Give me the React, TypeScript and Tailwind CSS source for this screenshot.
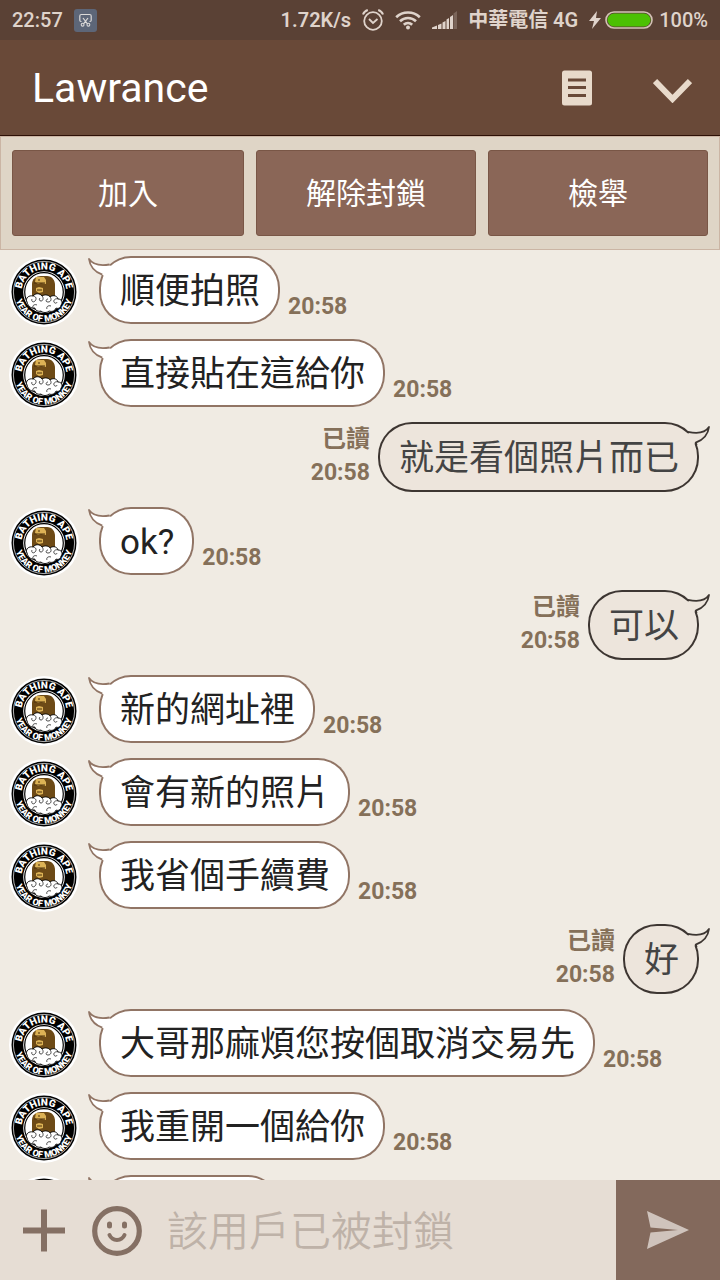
import { useId, useState } from 'react';

interface Message {
  id: number;
  text: string;
  time?: string;
  mine?: boolean;
}

const messages: Message[] = [
  { id: 1, text: '順便拍照', time: '20:58' },
  { id: 2, text: '直接貼在這給你', time: '20:58' },
  { id: 3, text: '就是看個照片而已', time: '20:58', mine: true },
  { id: 4, text: 'ok?', time: '20:58' },
  { id: 5, text: '可以', time: '20:58', mine: true },
  { id: 6, text: '新的網址裡', time: '20:58' },
  { id: 7, text: '會有新的照片', time: '20:58' },
  { id: 8, text: '我省個手續費', time: '20:58' },
  { id: 9, text: '好', time: '20:58', mine: true },
  { id: 10, text: '大哥那麻煩您按個取消交易先', time: '20:58' },
  { id: 11, text: '我重開一個給你', time: '20:58' },
  { id: 12, text: '\u3000\u3000\u3000\u3000' },
];

function StatusBar() {
  return (
    <div className="flex h-10 shrink-0 items-center justify-between bg-[#5a4135] px-3 text-[20px] leading-none font-semibold text-[#dfd3cb]">
      <div className="flex items-center gap-[11px]">
        <span className="font-medium">22:57</span>
        <svg width="23" height="23" viewBox="0 0 23 23" fill="none">
          <rect width="23" height="23" rx="3" fill="#5d6678" />
          <path d="M7.500 12.500H7a1.200 1.200 0 0 1-1.200-1.200V7A1.500 1.500 0 0 1 7.300 5.500h8.400A1.500 1.500 0 0 1 17.200 7v4.300a1.200 1.200 0 0 1-1.200 1.200h-.5M9 9l4.300 5.600M14 9l-4.300 5.600" stroke="#dcdad9" strokeWidth="1.200" />
          <circle cx="8.600" cy="15.700" r="1.400" stroke="#dcdad9" strokeWidth="1.100" />
          <circle cx="14.400" cy="15.700" r="1.400" stroke="#dcdad9" strokeWidth="1.100" />
        </svg>
      </div>
      <div className="flex items-center gap-[11px]">
        <span>1.72K/s</span>
        <svg width="22" height="22" viewBox="0 0 22 22" fill="none" stroke="currentColor" strokeWidth="1.800">
          <circle cx="11" cy="12" r="8.800" />
          <path d="M7 10l4 4 4.500-4" />
          <path d="M1 5.500C1.800 3.300 3.500 1.700 5.800 1M21 5.500C20.200 3.300 18.500 1.700 16.200 1" strokeWidth="2" />
        </svg>
        <svg width="26" height="20" viewBox="0 0 26 20" fill="none" stroke="currentColor" strokeWidth="2.600">
          <path d="M1.200 7.200c6.500-6.300 17.100-6.300 23.600 0M5 11.200c4.500-4.300 11.500-4.300 16 0M8.800 14.800c2.400-2.200 6-2.200 8.400 0" />
          <circle cx="13" cy="17.600" r="2" fill="currentColor" stroke="none" />
        </svg>
        <svg width="25" height="18" viewBox="0 0 25 18" fill="currentColor">
          <path d="M0 18v-1.500l5-2V18zM6 18v-4l3.500-1.500V18zM10.500 18v-6.500l3-1.500v8zM14.500 18V8.500l2.500-1.500v11zM18 18V6l3-2v14z" />
          <path d="M21.500 18V2.500L25 0v18z" opacity=".25" />
        </svg>
        <span>中華電信 4G</span>
        <div className="flex items-center gap-1">
          <svg width="12" height="20" viewBox="0 0 12 20" fill="currentColor">
            <path d="M8 1L0 11h5L3 19l9-11H7z" />
          </svg>
          <svg width="48" height="18" viewBox="0 0 48 18">
            <rect x="1" y="1" width="46" height="16" rx="8" fill="#5a4135" stroke="#d3c3b5" strokeWidth="1.600" />
            <rect x="2.500" y="2.500" width="43" height="13" rx="6.500" fill="#4cc003" />
          </svg>
          <span className="pl-0.5 font-medium">100%</span>
        </div>
      </div>
    </div>
  );
}

function Avatar() {
  const id = useId();

  return (
    <svg width="70" height="70" viewBox="0 0 70 70" className="shrink-0" role="img" aria-label="Lawrance">
      <defs>
        <path id={`${id}-top`} d="M12.500 35a22.500 22.500 0 0 1 45 0" />
        <path id={`${id}-bottom`} d="M5.500 35a29.500 29.500 0 0 0 59 0" />
      </defs>
      <circle cx="35" cy="35" r="35" fill="#fff" />
      <circle cx="35" cy="35" r="32.500" fill="#000" />
      <circle cx="35" cy="35" r="30.600" fill="none" stroke="#fff" strokeWidth=".7" />
      <circle cx="35" cy="35" r="20.800" fill="#fff" />
      <circle cx="35" cy="35" r="19.300" fill="none" stroke="#000" strokeWidth="1.200" />
      <path d="M23 40V27c0-5 4-8 9-8h6c5 0 8 4 8 9v12z" fill="#6d4a16" />
      <path d="M27 20h8l2 3v4l-5-1-3 1-3-2zM27 31l3-1 4 1v4l-4 1-3-2z" fill="#dcb255" />
      <path d="M25 26h11M28 33h5M30 22v2" stroke="#4a2f0a" strokeWidth="1" />
      <path
        d="M18 45c-2-4 2-7 6-6 2-3 7-3 9 0 3-2 7-1 8 1 2-2 7-2 8 2 4 0 5 4 3 6 0 3-3 4-5 3-1 3-4 4-7 3-2 2-6 2-8 0-3 1-6-1-6-3-4 1-7-2-8-6z"
        fill="#fff"
        stroke="#000"
        strokeWidth=".9"
      />
      <path
        d="M24 39c3 0 4 3 2 5s-4 0-3-2M33 39c2 2 1 5-1 5s-2-2-1-3M41 40c2 2 1 5-2 5s-2-3 0-3M49 42c-2-1-5 1-4 3s3 1 3 0M24 51c-1-3 2-4 4-3M38 52c-1-2 1-4 4-3"
        fill="none"
        stroke="#000"
        strokeWidth=".7"
      />
      <g fill="#fff" textAnchor="middle" className="font-black">
        <text fontSize="10">
          <textPath href={`#${id}-top`} startOffset="50%">BATHING APE</textPath>
        </text>
        <text fontSize="9">
          <textPath href={`#${id}-bottom`} startOffset="50%">YEAR OF MONKEY</textPath>
        </text>
      </g>
    </svg>
  );
}

function IncomingMessage({ message }: { message: Message }) {
  return (
    <li className="flex items-end pl-[9px]">
      <div className="h-[68px] pt-px">
        <Avatar />
      </div>
      <div className="relative ml-5 h-[68px] rounded-[32px] bg-white pr-5 pl-[21px] text-[35px] leading-[72px] whitespace-nowrap text-[#222] ring-2 ring-[#917565] ring-inset">
        {message.text}
        <svg width="32" height="24" viewBox="-12 0 32 24" className="absolute top-0 -left-3">
          <path d="M-10 3C-7 8 0 10 9.500 9L18 12 8 22 3.700 19C-3 17-8 11-10 3z" fill="#fff" />
          <path d="M10.500 8.500C1 10-6 9-10 3C-9 11-4 16 3.300 18.700" fill="none" stroke="#917565" strokeWidth="1.800" strokeLinejoin="round" />
        </svg>
      </div>
      {message.time && (
        <time className="ml-2 pb-[3px] text-[23px] leading-7 font-bold text-[#857059]">{message.time}</time>
      )}
    </li>
  );
}

function OutgoingMessage({ message }: { message: Message }) {
  return (
    <li className="flex items-start justify-end pr-[21px]">
      <div className="mr-2 pt-px text-right text-[23px] leading-[33px] font-bold text-[#857059]">
        <p className="text-[24px]">已讀</p>
        <time className="block">{message.time}</time>
      </div>
      <div className="relative h-[70px] rounded-[34px] bg-[#ede5dc] pr-5 pl-[21px] text-[35px] leading-[74px] whitespace-nowrap text-[#444] ring-2 ring-[#3d3632] ring-inset">
        {message.text}
        <svg width="32" height="24" viewBox="-20 -2 32 24" className="absolute top-0 -right-3">
          <path d="M10 3C7 8 0 10-9.500 9L-18 12-8 22-3.700 19C3 17 8 11 10 3z" fill="#ede5dc" />
          <path d="M-11 7.800C-1 10 6 9 10 3C9 11 4 16-3.300 18.700L-2.300 21" fill="none" stroke="#3d3632" strokeWidth="1.800" strokeLinejoin="round" />
        </svg>
      </div>
    </li>
  );
}

export default function App() {
  const [draft, setDraft] = useState('');
  const actionClass =
    'h-[86px] rounded-[3px] border border-[#795646] bg-[#8a6657] pt-0.5 text-[30px] leading-none text-white';

  return (
    <div className="flex h-screen flex-col bg-[#f0ebe3] font-[Roboto,'Noto_Sans_CJK_TC',sans-serif]">
      <StatusBar />

      <header className="flex h-24 shrink-0 items-center border-b border-[#2d1006] bg-[#694938] pr-7 pl-8">
        <h1 className="flex-1 pt-0.5 text-[41px] leading-none text-white">Lawrance</h1>
        <button type="button" aria-label="Notes">
          <svg width="30" height="36" viewBox="0 0 30 36">
            <rect width="30" height="35" y=".5" rx="2.500" fill="#e8dacb" />
            <path d="M6 10h18M6 17.500h18M6 25.500h18" stroke="#694938" strokeWidth="3" />
          </svg>
        </button>
        <button type="button" aria-label="Open menu" className="ml-[61px] pt-1.5">
          <svg width="39" height="25" viewBox="0 0 39 25" fill="none">
            <path d="M2 3l17.500 18L37 3" stroke="#e8dacb" strokeWidth="6" />
          </svg>
        </button>
      </header>

      <div className="grid shrink-0 grid-cols-[232fr_220fr_220fr] gap-3 border border-[#cbb5a4] bg-[#dfd5c6] px-[11px] py-[13px]">
        <button type="button" className={actionClass}>加入</button>
        <button type="button" className={actionClass}>解除封鎖</button>
        <button type="button" className={actionClass}>檢舉</button>
      </div>

      <main className="min-h-0 flex-1 overflow-y-auto [scrollbar-width:none]">
        <ul className="flex flex-col gap-[15px] pt-1.5">
          {messages.map(message =>
            message.mine ? (
              <OutgoingMessage key={message.id} message={message} />
            ) : (
              <IncomingMessage key={message.id} message={message} />
            ),
          )}
        </ul>
      </main>

      <form
        onSubmit={e => {
          e.preventDefault();
          setDraft('');
        }}
        className="flex h-[100px] shrink-0 items-center bg-[#e6ddd4] pl-[22px]"
      >
        <button type="button" aria-label="Add attachment">
          <svg width="44" height="44" viewBox="0 0 44 44" stroke="#857064" strokeWidth="6">
            <path d="M22 1.500v42M1 22.500h42" />
          </svg>
        </button>
        <button type="button" aria-label="Stickers" className="ml-[26px] pt-0.5">
          <svg width="50" height="50" viewBox="0 0 50 50" fill="none" stroke="#857064">
            <circle cx="25" cy="25" r="22.300" strokeWidth="5.200" />
            <path d="M17.500 18v2M32.500 18v2" strokeWidth="5" strokeLinecap="round" />
            <path d="M17.500 29c3 6.500 12 6.500 15 0" strokeWidth="4" strokeLinecap="round" />
          </svg>
        </button>
        <input
          type="text"
          aria-label="Message"
          placeholder="該用戶已被封鎖"
          value={draft}
          onChange={e => setDraft(e.target.value)}
          className="ml-[25px] min-w-0 flex-1 bg-transparent pt-1 text-[41px] leading-none font-[350] text-[#444] outline-none placeholder:text-[#beb2a8]"
        />
        <button type="submit" aria-label="Send" className="flex h-full w-[104px] items-center justify-center bg-[#83695c]">
          <svg width="42" height="38" viewBox="0 0 42 38" fill="#cfc3bc">
            <path d="M0 0l42 19L0 38l3.500-16.500L31 19 3.500 16.500z" />
          </svg>
        </button>
      </form>
    </div>
  );
}
